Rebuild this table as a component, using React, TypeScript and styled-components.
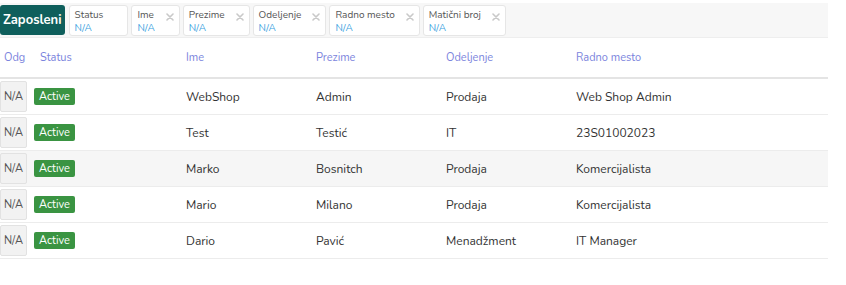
import styled, { createGlobalStyle } from "styled-components";

const GlobalStyle = createGlobalStyle`
  body {
    margin: 0;
    background: #fff;
    font-family: "Nunito", Lato, "Open Sans", sans-serif;
  }
`;

const filters = ["Status", "Ime", "Prezime", "Odeljenje", "Radno mesto", "Matični broj"];

const rows = [
  { ime: "WebShop", prezime: "Admin", odeljenje: "Prodaja", mesto: "Web Shop Admin" },
  { ime: "Test", prezime: "Testić", odeljenje: "IT", mesto: "23S01002023" },
  { ime: "Marko", prezime: "Bosnitch", odeljenje: "Prodaja", mesto: "Komercijalista" },
  { ime: "Mario", prezime: "Milano", odeljenje: "Prodaja", mesto: "Komercijalista" },
  { ime: "Dario", prezime: "Pavić", odeljenje: "Menadžment", mesto: "IT Manager" },
];

const CloseIcon = ({ hidden }: { hidden?: boolean }) => (
  <ChipClose $hidden={hidden} width="8" height="8" viewBox="0 0 8 8">
    <path d="M1 1L7 7M7 1L1 7" stroke="#c9c9c9" strokeWidth="1.6" strokeLinecap="round" />
  </ChipClose>
);

const App = () => {
  return (
    <Page>
      <GlobalStyle />
      <Toolbar>
        <TitleButton>Zaposleni</TitleButton>
        {filters.map((f, i) => (
          <Chip key={f}>
            <ChipText>
              <ChipLabel>{f}</ChipLabel>
              <ChipValue>N/A</ChipValue>
            </ChipText>
            <CloseIcon hidden={i === 0} />
          </Chip>
        ))}
      </Toolbar>
      <Table>
        <HeaderRow>
          <Cell $w={40} $pl={4}>Odg</Cell>
          <Cell $w={146}>Status</Cell>
          <Cell $w={130}>Ime</Cell>
          <Cell $w={130}>Prezime</Cell>
          <Cell $w={130}>Odeljenje</Cell>
          <Cell>Radno mesto</Cell>
        </HeaderRow>
        {rows.map((r, i) => (
          <Row key={i} $striped={i === 2}>
            <Cell $w={34}>
              <OdgBox>N/A</OdgBox>
            </Cell>
            <Cell $w={152}>
              <Badge>Active</Badge>
            </Cell>
            <Cell $w={130}>{r.ime}</Cell>
            <Cell $w={130}>{r.prezime}</Cell>
            <Cell $w={130}>{r.odeljenje}</Cell>
            <Cell>{r.mesto}</Cell>
          </Row>
        ))}
      </Table>
    </Page>
  );
};

export default App;

const Page = styled.div`
  width: 828px;
  padding-top: 3px;
`;

const Toolbar = styled.div`
  display: flex;
  align-items: center;
  gap: 3px;
  height: 34px;
  background: #f7f7f7;
  border-bottom: 1px solid #eeeeee;
`;

const TitleButton = styled.div`
  display: flex;
  align-items: center;
  height: 30px;
  padding: 0 3px;
  margin-right: 1px;
  background: #0f5f5c;
  color: #fff;
  font-weight: 700;
  font-size: 13px;
  border-radius: 3px;
`;

const Chip = styled.div`
  display: flex;
  align-items: flex-start;
  gap: 11px;
  height: 31px;
  box-sizing: border-box;
  padding: 3px 5px 0 5px;
  background: #fff;
  border: 1px solid #e6e6e6;
  border-radius: 3px;
`;

const ChipText = styled.div`
  display: flex;
  flex-direction: column;
`;

const ChipLabel = styled.span`
  font-size: 10px;
  line-height: 13px;
  color: #555;
`;

const ChipValue = styled.span`
  font-size: 10px;
  line-height: 12px;
  color: #3b9fe0;
`;

const ChipClose = styled.svg<{ $hidden?: boolean }>`
  flex: none;
  margin-top: 4px;
  visibility: ${(p) => (p.$hidden ? "hidden" : "visible")};
`;

const Table = styled.div`
  display: flex;
  flex-direction: column;
`;

const HeaderRow = styled.div`
  display: flex;
  align-items: center;
  height: 39px;
  border-bottom: 2px solid #e4e4e4;
  color: #7b84dd;
  font-size: 11px;
`;

const Row = styled.div<{ $striped?: boolean }>`
  display: flex;
  align-items: center;
  height: 35px;
  border-bottom: 1px solid #ececec;
  background: ${(p) => (p.$striped ? "#f6f6f6" : "#fff")};
  color: #333;
  font-size: 12px;
`;

const Cell = styled.div<{ $w?: number; $pl?: number }>`
  ${(p) => (p.$w ? `width: ${p.$w}px; flex: none;` : "flex: 1;")}
  padding-left: ${(p) => p.$pl ?? 0}px;
  box-sizing: border-box;
`;

const OdgBox = styled.div`
  display: flex;
  align-items: center;
  justify-content: center;
  width: 27px;
  height: 31px;
  box-sizing: border-box;
  background: #f2f2f2;
  border: 1px solid #e2e2e2;
  border-radius: 2px;
  color: #555;
  font-size: 11px;
`;

const Badge = styled.span`
  display: inline-block;
  background: #3a9442;
  color: #fff;
  font-size: 11px;
  line-height: 17px;
  padding: 0 5px;
  border-radius: 2px;
`;
